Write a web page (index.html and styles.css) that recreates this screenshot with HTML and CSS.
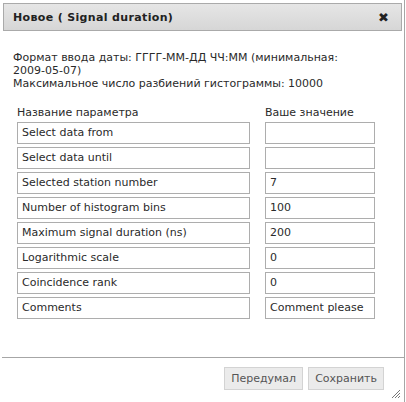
FILE: index.html
```html
<!DOCTYPE html>
<html lang="ru">
<head>
<meta charset="utf-8">
<title>Новое ( Signal duration)</title>
<link rel="stylesheet" href="styles.css">
</head>
<body>
<div class="dialog">
  <div class="titlebar">
    <span class="title">Новое ( Signal duration)</span>
    <span class="close">✖</span>
  </div>
  <div class="content">
    <p class="info">Формат ввода даты: ГГГГ-ММ-ДД ЧЧ:ММ (минимальная: 2009-05-07)<br>Максимальное число разбиений гистограммы: 10000</p>
    <div class="params">
      <div class="head">Название параметра</div>
      <div class="head">Ваше значение</div>
      <div class="cell">Select data from</div><div class="cell"></div>
      <div class="cell">Select data until</div><div class="cell"></div>
      <div class="cell">Selected station number</div><div class="cell">7</div>
      <div class="cell">Number of histogram bins</div><div class="cell">100</div>
      <div class="cell">Maximum signal duration (ns)</div><div class="cell">200</div>
      <div class="cell">Logarithmic scale</div><div class="cell">0</div>
      <div class="cell">Coincidence rank</div><div class="cell">0</div>
      <div class="cell">Comments</div><div class="cell">Comment please</div>
    </div>
  </div>
  <div class="footer">
    <button class="btn">Передумал</button>
    <button class="btn">Сохранить</button>
  </div>
  <div class="grip"><svg width="10" height="10" viewBox="0 0 10 10"><path d="M9 1L1 9M9 4L4 9M9 7L7 9" stroke="#777" stroke-width="1"/></svg></div>
</div>
</body>
</html>
```

FILE: styles.css
```css
html, body {
  margin: 0;
  padding: 0;
  background: #fff;
}
body {
  font-family: "DejaVu Sans", Verdana, sans-serif;
  font-size: 11px;
  color: #2a2a2a;
  width: 406px;
  height: 402px;
  overflow: hidden;
}
.dialog {
  position: relative;
  box-sizing: border-box;
  width: 405px;
  height: 402px;
  border-right: 1px solid #a6a6a6;
  display: flex;
  flex-direction: column;
}
.titlebar {
  margin: 3px 2px 0 3px;
  height: 26px;
  border: 1px solid #aaa;
  background: linear-gradient(#e6e6e6, #d6d6d6);
  display: flex;
  align-items: center;
  justify-content: space-between;
  padding: 0 12px 0 9px;
}
.title {
  font-weight: bold;
  font-size: 11px;
  letter-spacing: 0.35px;
  color: #222;
}
.close {
  font-size: 13px;
  color: #222;
}
.content {
  padding: 0 13px;
  flex: 1;
}
.info {
  margin: 20px 0 0 0;
  line-height: 13px;
  padding-right: 50px;
}
.params {
  margin: 16px 0 0 4px;
  display: grid;
  grid-template-columns: 233px 110px;
  column-gap: 15px;
  row-gap: 3px;
}
.head {
  line-height: 13px;
  height: 13px;
}
.cell {
  box-sizing: border-box;
  height: 22px;
  border: 1px solid #adadad;
  padding: 0 4px;
  line-height: 20px;
  white-space: nowrap;
  overflow: hidden;
}
.footer {
  border-top: 1px solid #a6a6a6;
  margin: 0 0 0 2px;
  height: 45px;
  display: flex;
  justify-content: flex-end;
  align-items: flex-start;
  gap: 5px;
  padding: 9px 20px 0 0;
  box-sizing: border-box;
}
.btn {
  font-family: "DejaVu Sans", Verdana, sans-serif;
  font-size: 11px;
  color: #555;
  background: #ebebeb;
  border: 1px solid #d3d3d3;
  height: 23px;
  padding: 0 6px;
  margin: 0;
}
.grip {
  position: absolute;
  right: 3px;
  bottom: 3px;
  width: 10px;
  height: 10px;
}
.grip svg {
  display: block;
}
```
